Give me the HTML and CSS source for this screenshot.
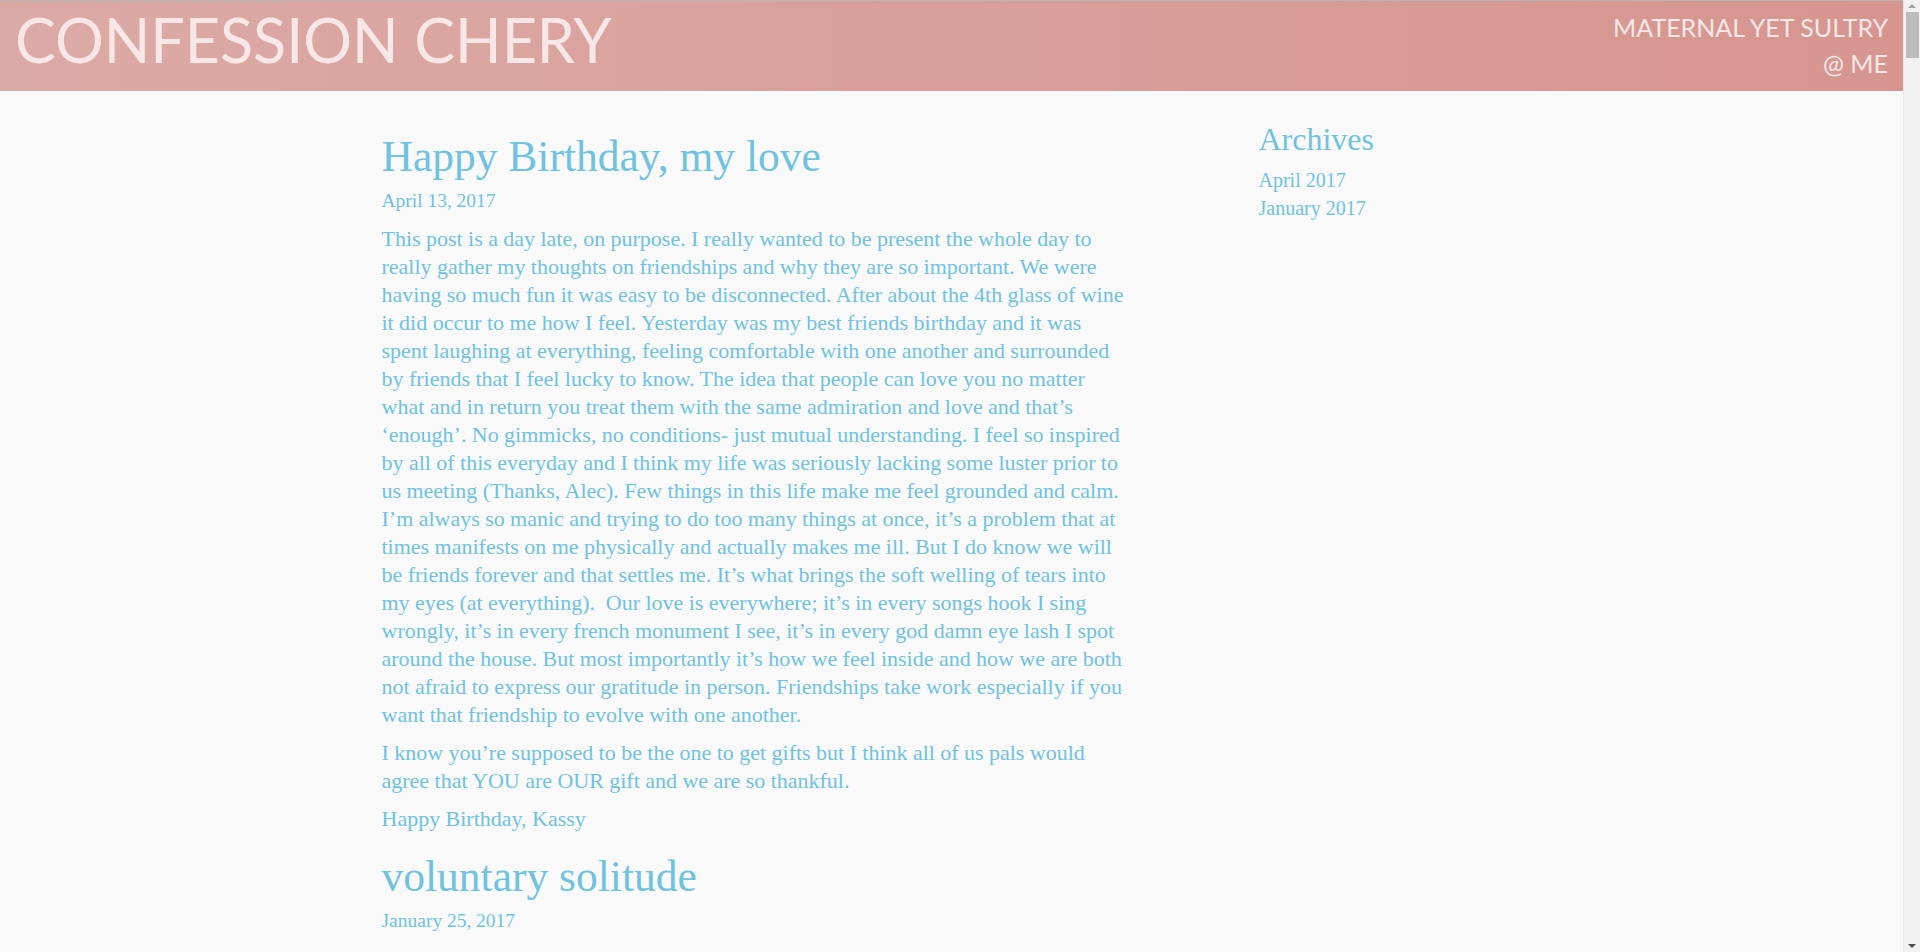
FILE: index.html
```html
<!DOCTYPE html>
<html lang="en">
<head>
<meta charset="utf-8">
<title>Confession Chery</title>
<link rel="stylesheet" href="styles.css">
</head>
<body>
<header class="site-header">
  <div class="site-title">CONFESSION CHERY</div>
  <div class="site-tagline">
    <div>MATERNAL YET SULTRY</div>
    <div>@ ME</div>
  </div>
</header>
<div class="layout">
  <main class="posts">
    <article class="post">
      <h2 class="post-title">Happy Birthday, my love</h2>
      <p class="post-date">April 13, 2017</p>
      <p>This post is a day late, on purpose. I really wanted to be present the whole day to really gather my thoughts on friendships and why they are so important. We were having so much fun it was easy to be disconnected. After about the 4th glass of wine it did occur to me how I feel. Yesterday was my best friends birthday and it was spent laughing at everything, feeling comfortable with one another and surrounded by friends that I feel lucky to know. The idea that people can love you no matter what and in return you treat them with the same admiration and love and that’s ‘enough’. No gimmicks, no conditions- just mutual understanding. I feel so inspired by all of this everyday and I think my life was seriously lacking some luster prior to us meeting (Thanks, Alec). Few things in this life make me feel grounded and calm. I’m always so manic and trying to do too many things at once, it’s a problem that at times manifests on me physically and actually makes me ill. But I do know we will be friends forever and that settles me. It’s what brings the soft welling of tears into my eyes (at everything).&nbsp; Our love is everywhere; it’s in every songs hook I sing wrongly, it’s in every french monument I see, it’s in every god damn eye lash I spot around the house. But most importantly it’s how we feel inside and how we are both not afraid to express our gratitude in person. Friendships take work especially if you want that friendship to evolve with one another.</p>
      <p>I know you’re supposed to be the one to get gifts but I think all of us pals would agree that YOU are OUR gift and we are so thankful.</p>
      <p>Happy Birthday, Kassy</p>
    </article>
    <article class="post">
      <h2 class="post-title">voluntary solitude</h2>
      <p class="post-date">January 25, 2017</p>
    </article>
  </main>
  <aside class="sidebar">
    <h4 class="sidebar-title">Archives</h4>
    <ul class="archive-list">
      <li><a href="#">April 2017</a></li>
      <li><a href="#">January 2017</a></li>
    </ul>
  </aside>
</div>
<div class="scrollbar" aria-hidden="true">
  <div class="scrollbar-arrow up"></div>
  <div class="scrollbar-thumb"></div>
  <div class="scrollbar-arrow down"></div>
</div>
</body>
</html>
```
FILE: styles.css
```css
html, body {
  margin: 0;
  padding: 0;
}
body {
  background: #f9f9f9;
  color: #6fc2e0;
  font-family: "Liberation Serif", "Times New Roman", serif;
  padding-right: 17px;
}
.site-header {
  box-sizing: border-box;
  height: 91px;
  border-top: 1px solid #b5b5b5;
  padding: 8px 15px 0;
  display: flex;
  justify-content: space-between;
  align-items: flex-start;
  background: linear-gradient(to right, #dcaaa6, #d7958f);
  color: #f7e8e7;
  font-family: Lato, "Liberation Sans", sans-serif;
}
.site-title {
  font-size: 61px;
  line-height: 62px;
}
.site-tagline {
  text-align: right;
  font-size: 25px;
  line-height: 36px;
}
.layout {
  width: 1140px;
  margin: 0 auto;
  display: grid;
  grid-template-columns: 748px 263px;
  column-gap: 129px;
  padding-bottom: 240px;
}
.posts {
  padding-top: 44px;
  display: flex;
  flex-direction: column;
  gap: 12px;
}
.post p {
  margin: 0 0 10px;
  font-size: 22px;
  line-height: 28px;
  word-spacing: -0.1px;
}
.post-title {
  margin: 0 0 10px;
  font-size: 43.5px;
  line-height: 42px;
  font-weight: 400;
}
.post .post-date {
  font-size: 19.5px;
}
.sidebar {
  padding-top: 30px;
}
.sidebar-title {
  margin: 0 0 9px;
  font-size: 32px;
  line-height: 36px;
  font-weight: 400;
}
.archive-list {
  list-style: none;
  margin: 0;
  padding: 0;
  font-size: 20px;
  line-height: 28px;
}
.archive-list a {
  color: inherit;
  text-decoration: none;
}
.scrollbar {
  position: fixed;
  top: 0;
  right: 0;
  bottom: 0;
  width: 17px;
  background: #f1f1f1;
  border-left: 1px solid #e8e8e8;
  box-sizing: border-box;
  display: flex;
  flex-direction: column;
  align-items: center;
}
.scrollbar-thumb {
  width: 13px;
  height: 46px;
  margin-top: 1px;
  background: #bcbcbc;
}
.scrollbar-arrow {
  width: 0;
  height: 0;
  border-left: 4px solid transparent;
  border-right: 4px solid transparent;
}
.scrollbar-arrow.up {
  margin: 4px 0 3px;
  border-bottom: 4px solid #a3a3a3;
}
.scrollbar-arrow.down {
  margin: auto 0 4px;
  border-top: 4px solid #505050;
}
```
